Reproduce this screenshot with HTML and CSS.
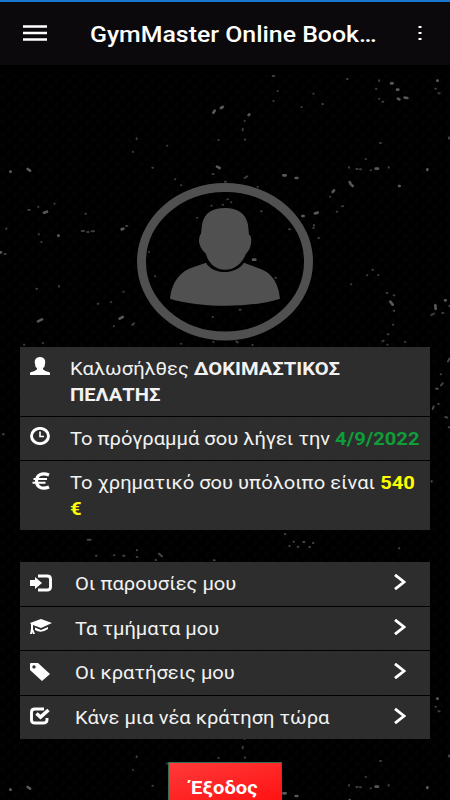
FILE: index.html
```html
<!DOCTYPE html>
<html lang="el">
<head>
<meta charset="utf-8">
<title>GymMaster Online Booking</title>
<link rel="stylesheet" href="styles.css">
</head>
<body>
<svg class="texture" viewBox="0 0 450 800" aria-hidden="true">
  <defs>
    <pattern id="weave" width="12" height="12" patternUnits="userSpaceOnUse">
      <circle cx="3" cy="3" r="2.4" fill="#030303"/><circle cx="9" cy="9" r="2.4" fill="#030303"/>
    </pattern>
    <g id="specks" stroke-linecap="round" fill="none">
      <g transform="translate(0 60) scale(.33333)">
        <path stroke="#585858" stroke-width="8" d="M640 158l4-6M663 144l5-3M31 335h1M83 327l7 5M132 458l9-3M175 527h1M365 508l5-2M114 784l12-6M359 776l9-5M651 320l8 4M0 577h3"/>
        <path stroke="#3c3c3c" stroke-width="6" d="M399 275v1M457 323h2M501 257h1M655 240h1M525 358h1M543 376h1M378 498h4M85 450h4M163 431h1M115 440v1M256 461h2M245 513h7M262 516h4M275 514h7M19 505v2M116 523h1M124 546h1M14 582h3M177 678v2M109 686h2M370 695h1M293 731h2M333 726v1M341 799h1M397 795l5-5M128 849h1M72 854h1M543 851h1M591 473h1M634 437h1M668 434h1M447 575v1M465 649h1M638 771h1M640 846h1M410 235v3M638 342h3"/>
      </g>
      <g transform="translate(225 60) scale(.33333)">
        <path stroke="#585858" stroke-width="8" d="M498 70h5M516 89h4M519 116l4 2M539 113l8 1M452 326h7M607 328v2M175 346h7M212 354h5M374 366q2 7 9 12M323 396l4-5M522 378h2M84 599h7M270 460l8-2M232 468h4M631 736l1 11M660 721h2M637 62h1M71 165l2-2M496 725l7 9"/>
        <path stroke="#3c3c3c" stroke-width="6" d="M366 57h2M453 87h1M462 61v2M462 116h1M472 125h3M292 132h2M265 101h1M229 141h1M145 123h1M158 93v1M143 48h5M59 182v1M53 206v5M60 238v1M631 86h2M640 100h4M672 232v4M465 249h3M422 297h1M372 321v2M394 327h4M405 328h3M437 331h1M491 321v2M315 410h1M351 439h3M335 455h2M59 354l7-5M98 380v1M108 454h2M7 418h2M18 427h1M192 508h3M267 495v2M265 504h1M280 534h2M151 653h2M442 629h2M459 645h1M426 646h1M378 673h1M485 699h2M506 706h2M506 752h2M504 794h1M488 823h3M472 844l4-2M487 854h1M540 846h1M652 759h3M619 765l8-4M673 737v2M82 855h1M34 844l4 3M44 749h3M0 365h3"/>
      </g>
    </g>
  </defs>
  <rect y="75" width="450" height="725" fill="url(#weave)"/>
  <use href="#specks"/>
  <use href="#specks" y="618"/>
  <g stroke-linecap="round" fill="none" stroke="#464646" stroke-width="6">
    <path transform="translate(430 345) scale(.33333)" d="M54 49l4-8M33 121l5-6M18 131h6M11 184l-3 8M25 177h1M46 216l6 2M56 247h2M32 88h1M5 408v2"/>
    <path transform="translate(0 345) scale(.33333)" d="M9 268h2"/>
    <path transform="translate(0 528) scale(.33333)" d="M263 35h9M288 83h1M342 82h1M370 83h3M411 66v1M411 87h1M477 77l9 8M467 96h1M642 97h2M855 18h1M868 54h1M881 41h1M910 42h3M893 56h2M928 57h2M939 45h1M1197 61h1"/>
  </g>
</svg>
<header class="bar">
  <svg class="menu" viewBox="0 0 24 16"><path d="M0 1.5h24M0 8h24M0 14.500h24"/></svg>
  <h1 class="title"><span class="wide">GymMaster Online Book…</span></h1>
  <svg class="more" viewBox="0 0 4 14"><path d="M.5 1h3M.5 7h3M.5 13h3"/></svg>
</header>
<main class="page">
  <svg class="avatar" viewBox="0 0 176 158" preserveAspectRatio="none">
    <ellipse cx="88" cy="79" rx="83.500" ry="74.500" fill="none" stroke="#505050" stroke-width="9"/>
    <path fill="#505050" d="M88 25C100 25 109 30 111 42L112 52Q115 53 114 61Q113 67 109 71C105 81 98 87 88 87C78 87 71 80 69 71Q63 66 62 59Q62 53 64 51L65 42C67 30 75 25 88 25Z"/>
    <path fill="#505050" d="M69 80C76 92 98 93 107 80L123 86C137 91 142 104 143 116C113 126 62 125 33 116C34 105 39 92 52 86Z"/>
  </svg>
  <ul class="list info">
    <li class="row tall"><svg class="icon" viewBox="0 0 20 18"><path d="M10 0C14 0 16 3 15 7Q15 10 13 11V12Q14 14 19 15L20 16V18H0V16L1 15Q6 14 7 12V11Q5 10 5 7C4 3 6 0 10 0Z"/></svg>
      <p class="text wide">Καλωσήλθες <b>ΔΟΚΙΜΑΣΤΙΚΟΣ<br>ΠΕΛΑΤΗΣ</b></p></li>
    <li class="row"><svg class="icon" viewBox="0 0 20 18"><g class="line"><ellipse cx="10" cy="9" rx="8.500" ry="7.600"/><path stroke-width="1.600" d="M10 4.500v5h4"/></g></svg>
      <p class="text wide">Το πρόγραμμά σου λήγει την <b class="green">4/9/2022</b></p></li>
    <li class="row tall"><svg class="icon euro" viewBox="0 0 20 18"><g class="line"><path stroke-width="3.200" d="M19 3C12 0 6.500 3 6.500 9S12 18 19 15"/><path stroke-width="2" d="M3.500 7H17M2.500 10.800H15.500"/></g></svg>
      <p class="text wide">Το χρηματικό σου υπόλοιπο είναι <b class="yellow">540<br>€</b></p></li>
  </ul>
  <nav class="list links">
    <a class="row"><svg class="icon" viewBox="0 0 22 18"><path d="M0 6H5V3L12 9 5 15V12H0Z"/><path class="line" d="M8 2h9q3.500 0 3.500 3v8q0 3-3.500 3H8"/></svg><span class="text wide">Οι παρουσίες μου</span><svg class="chevron" viewBox="0 0 12 16"><path d="M1 .8 10 8 1 15.200"/></svg></a>
    <a class="row"><svg class="icon" viewBox="0 0 22 18"><path d="M0 5 11 1 22 5 11 10 3 7V11L5 16H3L2.500 14 2 16H0L1 11V6ZM5 9.500 11 12 18 9V11Q11 16 5 12Z"/></svg><span class="text wide">Τα τμήματα μου</span><svg class="chevron" viewBox="0 0 12 16"><path d="M1 .8 10 8 1 15.200"/></svg></a>
    <a class="row"><svg class="icon" viewBox="0 0 22 18"><path fill-rule="evenodd" d="M0 1Q0 0 1 0H8L20 11 12 18 0 7ZM4 2.200A1.700 1.700 0 1 0 4 5.600 1.700 1.700 0 1 0 4 2.200Z"/></svg><span class="text wide">Οι κρατήσεις μου</span><svg class="chevron" viewBox="0 0 12 16"><path d="M1 .8 10 8 1 15.200"/></svg></a>
    <a class="row"><svg class="icon" viewBox="0 0 22 18"><g class="line"><path stroke-width="2.900" d="M14 2H5Q1.500 2 1.500 5V13Q1.500 16 5 16H13Q17 16 17 13V11"/><path stroke-width="3.600" d="M6.500 6.500 10.500 10 18.500 3"/></g></svg><span class="text wide">Κάνε μια νέα κράτηση τώρα</span><svg class="chevron" viewBox="0 0 12 16"><path d="M1 .8 10 8 1 15.200"/></svg></a>
  </nav>
  <button class="exit"><span class="wide">Έξοδος</span></button>
</main>
</body>
</html>
```
FILE: styles.css
```css
* { box-sizing: border-box; }
html, body { margin: 0; height: 800px; overflow: hidden; }
html { background: #000; }
body { position: relative; isolation: isolate; color: #f2f2f2; font-family: Roboto, "Liberation Sans", sans-serif; }
.texture { position: absolute; inset: 0; z-index: -1; width: 450px; height: 800px; }
.bar { display: flex; align-items: center; height: 65px; padding: 0 28px 0 23px; border-top: 2px solid #1976d2; background: #0b090c; }
.menu { width: 24px; height: 16px; margin-top: -1px; }
.menu path, .more path { stroke: #fff; stroke-width: 2.7; }
.more path { stroke-width: 2; }
.more { width: 4px; height: 14px; margin: -1px 0 0 auto; }
.title { width: 300px; margin: 0 0 0 43px; color: #fff; font-size: 22.2px; font-weight: 500; white-space: nowrap; }
.wide { display: inline-block; transform: scaleX(1.12); transform-origin: left; }
.page { display: flex; flex-direction: column; align-items: center; }
.avatar { width: 176px; height: 157.5px; margin-top: 118px; }
.list { display: grid; gap: 1px; width: 410px; margin: 6.5px 0 0; padding: 0; list-style: none; }
.links { margin-top: 32px; }
.row { display: flex; height: 43.5px; padding: 9px 24px 0 10px; background: #2d2d2d; font-size: 18px; line-height: 26px; }
.row.tall { height: 68.75px; }
.icon { flex: none; width: 20px; height: 18px; margin-top: 1px; fill: #fff; }
.icon.euro { margin-top: 2px; }
.line { fill: none; stroke: #fff; stroke-width: 2.9; }
.text { margin: 0 0 0 19.5px; white-space: nowrap; }
.info .tall .text { line-height: 25.5px; }
.links .icon { width: 22px; margin-top: 2.5px; }
.links .text { margin-left: 22.5px; }
.chevron { flex: none; width: 12px; height: 16px; margin: 3px 0 0 auto; fill: none; stroke: #fff; stroke-width: 2.8; }
.green { color: #0f9d3a; }
.yellow { color: #ff0; }
.exit { width: 114px; height: 50px; margin-top: 23px; padding: 0 0 0 21px; border: 1px solid #346f55; background: linear-gradient(165deg, #ff3a3a, #ff0c0c); color: #fff; font: 700 18px Roboto, sans-serif; text-align: left; }
```
